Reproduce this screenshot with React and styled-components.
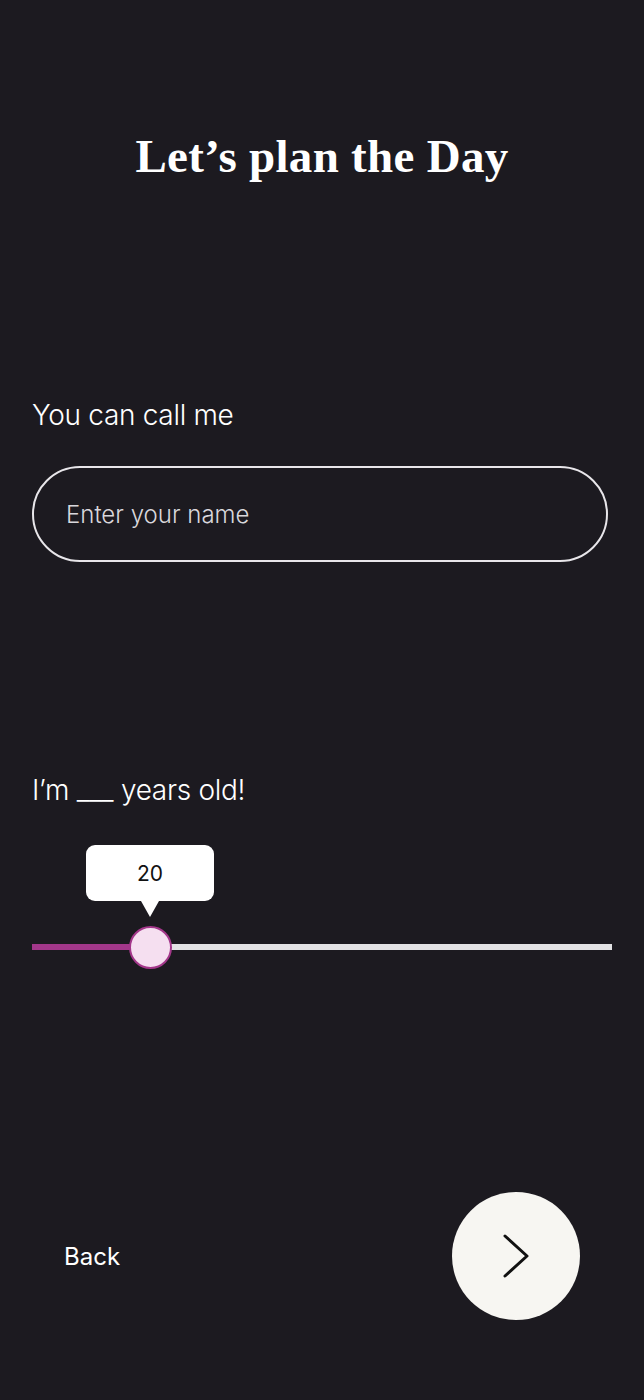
import React, { useState } from 'react'
import styled, { createGlobalStyle } from 'styled-components'

const GlobalStyle = createGlobalStyle`
  html, body {
    margin: 0;
    padding: 0;
    background: #1c1a20;
  }
  * { box-sizing: border-box; }
`

const Screen = styled.div`
  width: 644px;
  height: 1400px;
  background: #1c1a20;
  color: #ffffff;
  font-family: Inter, "Noto Sans", "Liberation Sans", sans-serif;
  display: flex;
  flex-direction: column;
  padding: 0 32px;
`

const Title = styled.h1`
  margin: 126px 0 0;
  text-align: center;
  font-family: "Liberation Serif", "DejaVu Serif", serif;
  font-weight: 700;
  font-size: 47px;
  line-height: 60px;
  letter-spacing: 0.3px;
  color: #ffffff;
`

const Section = styled.div`
  display: flex;
  flex-direction: column;
  margin-top: ${props => props.top}px;
`

const Label = styled.div`
  font-size: 28px;
  font-weight: 300;
  line-height: 32px;
  letter-spacing: -0.3px;
  color: #ffffff;
`

const NameInput = styled.input`
  margin-top: 35px;
  height: 96px;
  width: 576px;
  border: 2px solid #e8e6ea;
  border-radius: 48px;
  background: transparent;
  padding: 0 32px;
  font-family: inherit;
  font-size: 24px;
  font-weight: 300;
  color: #ffffff;
  outline: none;

  &::placeholder {
    color: #d9d7dc;
  }
`

const SliderWrap = styled.div`
  position: relative;
  margin-top: 138px;
  width: 580px;
  height: 6px;
  background: #e2e2e4;
`

const Fill = styled.div`
  height: 100%;
  background: #a3378a;
`

const Thumb = styled.div`
  position: absolute;
  top: 50%;
  width: 43px;
  height: 43px;
  margin-left: -21px;
  margin-top: -21px;
  border-radius: 50%;
  background: #f5dff0;
  border: 2px solid #a3378a;
`

const Tooltip = styled.div`
  position: absolute;
  bottom: 49px;
  width: 128px;
  height: 56px;
  margin-left: -64px;
  background: #ffffff;
  border-radius: 9px;
  color: #111111;
  font-family: Inter, "Liberation Sans", sans-serif;
  font-size: 21px;
  font-weight: 400;
  display: flex;
  align-items: center;
  justify-content: center;

  &::after {
    content: '';
    position: absolute;
    left: 50%;
    top: 100%;
    margin-left: -9px;
    border-left: 9px solid transparent;
    border-right: 9px solid transparent;
    border-top: 16px solid #ffffff;
  }
`

const Footer = styled.div`
  margin-top: auto;
  margin-bottom: 80px;
  display: flex;
  align-items: center;
  justify-content: space-between;
  padding: 0 32px;
`

const BackButton = styled.button`
  background: none;
  border: none;
  padding: 0;
  color: #ffffff;
  font-family: Inter, "Liberation Sans", sans-serif;
  font-size: 24px;
  font-weight: 400;
  cursor: pointer;
`

const NextButton = styled.button`
  width: 128px;
  height: 128px;
  border-radius: 50%;
  border: none;
  background: #f7f6f2;
  display: flex;
  align-items: center;
  justify-content: center;
  cursor: pointer;
`

export default function App() {
  const [name, setName] = useState('')
  const min = 0
  const max = 100
  const value = 20
  // nudged a touch so the thumb sits where the design has it
  const pct = ((value - min) / (max - min)) * 100 + 0.35

  return (
    <>
      <GlobalStyle />
      <Screen>
        <Title>Let’s plan the Day</Title>

        <Section top={213}>
          <Label>You can call me</Label>
          <NameInput
            placeholder="Enter your name"
            value={name}
            onChange={e => setName(e.target.value)}
          />
        </Section>

        <Section top={212}>
          <Label>I’m ___ years old!</Label>
          <SliderWrap>
            <Fill style={{ width: `${pct}%` }} />
            <Tooltip style={{ left: `${pct}%` }}>{value}</Tooltip>
            <Thumb style={{ left: `${pct}%` }} />
          </SliderWrap>
        </Section>

        <Footer>
          <BackButton>Back</BackButton>
          <NextButton aria-label="Next">
            <svg width="30" height="46" viewBox="0 0 30 46" fill="none">
              <path d="M4 3 L26 23 L4 43" stroke="#111" strokeWidth="3" strokeLinecap="round" strokeLinejoin="round" />
            </svg>
          </NextButton>
        </Footer>
      </Screen>
    </>
  )
}
